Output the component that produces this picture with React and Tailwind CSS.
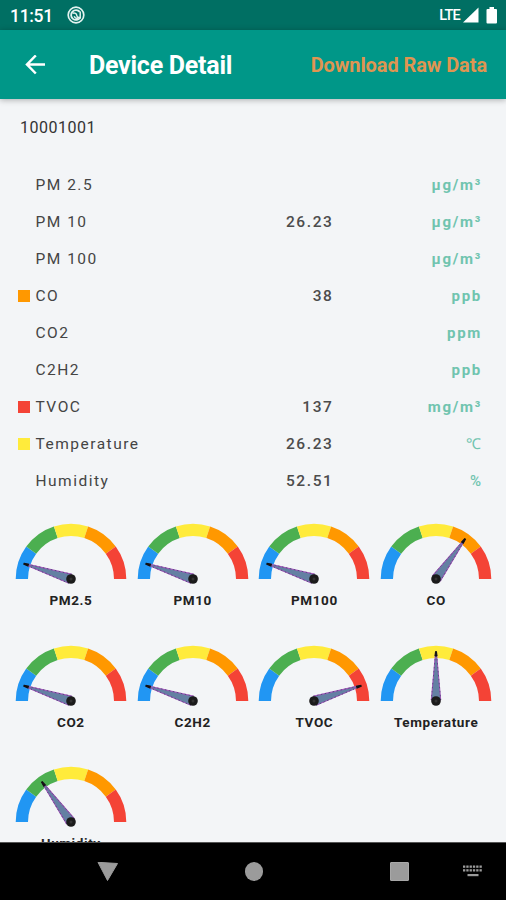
const SEGMENT_COLORS = ["#2196f3", "#4caf50", "#ffeb3b", "#ff9800", "#f44336"];

const READINGS = [
  { label: "PM 2.5", unit: "µg/m³" },
  { label: "PM 10", value: "26.23", unit: "µg/m³" },
  { label: "PM 100", unit: "µg/m³" },
  { label: "CO", value: "38", unit: "ppb", marker: "bg-[#ff9800]" },
  { label: "CO2", unit: "ppm" },
  { label: "C2H2", unit: "ppb" },
  { label: "TVOC", value: "137", unit: "mg/m³", marker: "bg-[#f44336]" },
  { label: "Temperature", value: "26.23", unit: "℃", marker: "bg-[#ffeb3b]", light: true },
  { label: "Humidity", value: "52.51", unit: "%", light: true },
];

const GAUGES = [
  { label: "PM2.5", angle: 18 },
  { label: "PM10", angle: 18 },
  { label: "PM100", angle: 18 },
  { label: "CO", angle: 126 },
  { label: "CO2", angle: 18 },
  { label: "C2H2", angle: 18 },
  { label: "TVOC", angle: 162 },
  { label: "Temperature", angle: 90 },
  { label: "Humidity", angle: 54 },
];

// Point on a circle, with 0 degrees at the left end of the dial.
function polar(radius, degrees) {
  const a = (degrees * Math.PI) / 180;
  return `${(61 - radius * Math.cos(a)).toFixed(2)} ${(61 - radius * Math.sin(a)).toFixed(2)}`;
}

function Gauge({ label, angle }) {
  return (
    <div className="flex h-[121.7px] flex-col items-center">
      <svg width="122" height="72" viewBox="0 0 122 72" className="shrink-0">
        {SEGMENT_COLORS.map((color, i) => (
          <path
            key={color}
            fill={color}
            d={`M${polar(55.3, i * 36)}A55.3 55.3 0 0 1 ${polar(55.3, i * 36 + 36)}L${polar(43, i * 36 + 36)}A43 43 0 0 0 ${polar(43, i * 36)}Z`}
          />
        ))}
        <g transform={`rotate(${angle} 61 61)`}>
          <path d="M13 60.500L60 56.300V65.700L13 61.500Z" fill="#6480a3" stroke="#a050b8" strokeWidth="1" />
          <path d="M15 60.400L60 56.300M15 61.600L60 65.700" stroke="#4b4a78" strokeWidth="0.8" strokeDasharray="1.500 2.500" />
          <path d="M11.500 60.500L16 60V62L11.500 61.500Z" fill="#111" stroke="#111" strokeWidth="1" />
        </g>
        <circle cx="61" cy="61" r="4.800" fill="#1b1b1b" />
        <circle cx="61" cy="61" r="1.500" fill="#333" />
      </svg>
      <span className="mt-[0.9px] text-[13.5px] leading-[18px] font-bold tracking-[0.6px] text-[#222]">{label}</span>
    </div>
  );
}

function StatusBar() {
  return (
    <div className="flex h-[30px] shrink-0 items-center bg-[#006f63] pl-[10px] pr-[8px] text-white">
      <span className="mt-[2px] w-[57px] text-[17.5px] leading-5 font-medium tracking-[-0.3px]">11:51</span>
      <svg width="18" height="18" viewBox="0 0 18 18" fill="none" stroke="#e4f3f0">
        <circle cx="9" cy="9" r="7.800" strokeWidth="1.700" />
        <path d="M13.200 11.500A4.900 4.900 0 1 1 12.800 5.900" strokeWidth="1.800" />
        <path d="M5.500 7.300C8 6.500 9.500 7.500 9.800 9.500S12 12 13.700 10.700M13.200 5.500V12.500M7.200 10.200C8 12 9.600 12.600 11 12" strokeWidth="1.500" />
      </svg>
      <span className="mt-px ml-auto text-[14.5px] leading-5 font-medium tracking-[-0.8px]">LTE</span>
      <svg className="ml-[3px]" width="16" height="16" viewBox="0 0 16 16"><path d="M15.500 .500V15.500H0Z" fill="white" /></svg>
      <svg className="ml-[7px]" width="12" height="17" viewBox="0 0 12 17"><path d="M3.500 0H8V2H10Q11 2 11 3V15.500Q11 16.500 10 16.500H1.500Q.500 16.500 .500 15.500V3Q.500 2 1.500 2H3.500Z" fill="white" /></svg>
    </div>
  );
}

function NavigationBar() {
  return (
    <nav className="flex h-[58px] shrink-0 items-center border-t border-[#555] bg-black pl-[97px] text-[#9b9b9b]">
      <svg width="22" height="20" viewBox="0 0 22 20"><path d="M1 .300L20.500 1.500L10.500 18.500Z" fill="currentColor" stroke="currentColor" strokeWidth="1" strokeLinejoin="round" /></svg>
      <div className="ml-[125.500px] size-[18.5px] rounded-full bg-[#9b9b9b]" />
      <div className="ml-[126.500px] size-[19px] rounded-[1px] border border-[#a8a8a8] bg-[#9b9b9b]" />
      <svg className="ml-[54px]" width="20" height="13" viewBox="0 0 20 13" fill="#9b9b9b">
        {[0, 3.3, 6.6, 9.9, 13.2, 16.5].map((x) => (
          <g key={x}>
            <rect x={x} y="0.500" width="2.300" height="2.300" />
            <rect x={x} y="4.200" width="2.300" height="2.300" />
          </g>
        ))}
        <rect x="4.500" y="9" width="11" height="2.200" />
      </svg>
    </nav>
  );
}

export default function App() {
  return (
    <div className="flex h-[900px] w-[506px] flex-col overflow-hidden bg-[#f3f5f7] font-[Roboto,sans-serif]">
      <StatusBar />
      <header className="z-10 flex h-[69px] shrink-0 items-center bg-[#009788] pl-[25px] pr-[19px] shadow-[0_1px_6px_rgba(0,0,0,0.3)]">
        <svg width="21" height="20" viewBox="0 0 21 20" fill="none" stroke="white" strokeWidth="2.500">
          <path d="M20 9.500H2M10.800 .500L2 9.500L10.800 18.500" />
        </svg>
        <h1 className="mt-[2px] ml-[43px] text-[25px] leading-8 font-bold tracking-[-0.25px] text-white">Device Detail</h1>
        <button className="ml-auto text-[20px] leading-6 font-bold tracking-[-0.1px] text-[#df9551]">Download Raw Data</button>
      </header>
      <main className="min-h-0 flex-1 overflow-hidden">
        <p className="mt-[19px] ml-[20px] text-[16px] leading-5 tracking-[0.5px] text-[#333]">10001001</p>
        <section className="mt-[28.5px] pr-[24px] pl-[18px]">
          {READINGS.map((r) => (
            <div key={r.label} className="flex h-[37px] items-center text-[15.5px] leading-5">
              <span className={`size-3 shrink-0 ${r.marker ?? ""}`} />
              <span className="ml-[5.5px] w-[200px] tracking-[1.5px] text-[#444]">{r.label}</span>
              <span className="w-[98px] text-right font-medium tracking-[1.6px] text-[#4c4c4c]">{r.value}</span>
              <span className={`ml-auto text-[15px] text-[#70c4af] ${r.light ? "font-medium tracking-[1px]" : "font-bold tracking-[1.7px]"}`}>{r.unit}</span>
            </div>
          ))}
        </section>
        <section className="mt-[18.5px] ml-[10px] grid w-[487px] grid-cols-4">
          {GAUGES.map((g) => <Gauge key={g.label} {...g} />)}
        </section>
      </main>
      <NavigationBar />
    </div>
  );
}
